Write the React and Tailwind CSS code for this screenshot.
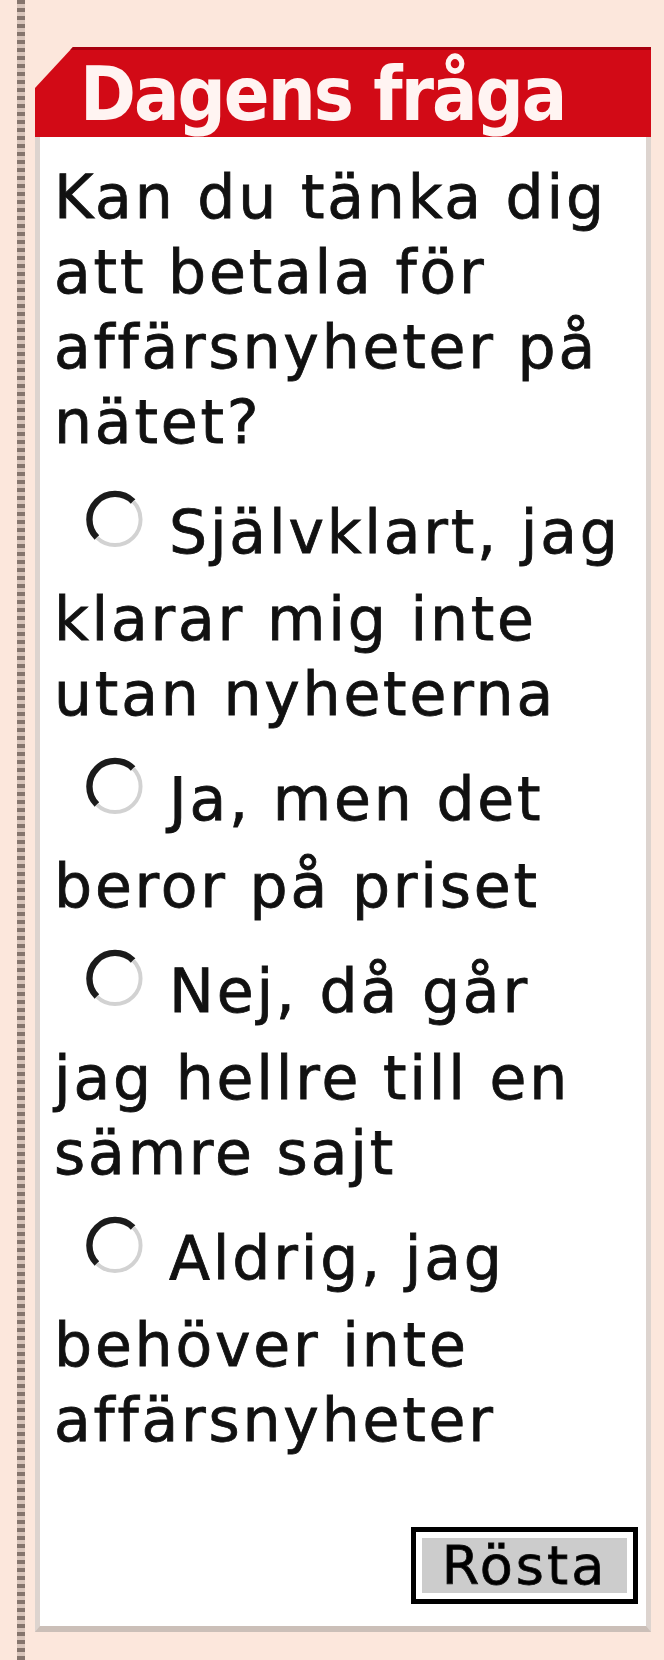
const options = [
  ["Självklart, jag", "klarar mig inte", "utan nyheterna"],
  ["Ja, men det", "beror på priset"],
  ["Nej, då går", "jag hellre till en", "sämre sajt"],
  ["Aldrig, jag", "behöver inte", "affärsnyheter"],
];

// old-style sunken radio: dark upper-left arc, pale lower-right arc
const Radio = () => (
  <svg
    viewBox="0 0 60 60"
    className="inline-block w-[60px] h-[59px] ml-[31px] mr-[24px] mt-[25px] mb-[33px] align-[-29px]"
  >
    <circle cx="30" cy="30" r="26" fill="#ffffff" />
    <path d="M48.4 11.6 A26 26 0 0 0 11.6 48.4" stroke="#1b1b1b" strokeWidth="6.5" fill="none" />
    <path d="M11.6 48.4 A26 26 0 0 0 48.4 11.6" stroke="#d2d2d2" strokeWidth="4" fill="none" />
  </svg>
);

export default function App() {
  return (
    <div className="flex w-[664px] h-[1660px] bg-[#fce7dc] font-['DejaVu_Sans',sans-serif]">
      {/* dotted rule down the left edge */}
      <div className="w-[35px] shrink-0">
        <div className="ml-[17px] w-[8px] h-full bg-[repeating-linear-gradient(to_bottom,#85756d_0px,#85756d_4px,#d8c5bb_4px,#d8c5bb_8px)]" />
      </div>

      <div className="w-[616px] mt-[47px] flex flex-col">
        {/* red title bar with the clipped corner */}
        <div className="h-[90px] bg-[#d20a16] border-t-[3px] border-[#a8000e] pl-[45px] pt-[1px] [clip-path:polygon(38px_0,100%_0,100%_100%,0_100%,0_41px)]">
          <h2 className="text-[75px] leading-[86px] font-bold tracking-[-2px] text-[#fff4f2] font-['DejaVu_Sans_Condensed','DejaVu_Sans',sans-serif] font-stretch-condensed whitespace-nowrap">
            Dagens fråga
          </h2>
        </div>

        <div className="bg-white border-x-[5px] border-b-[6px] border-x-[#ddd4cf] border-b-[#cbbfb8] pl-[14px] pt-[23px] pr-[8px] pb-[22px] text-[60px] leading-[75px] tracking-[2.8px] text-[#111111] [-webkit-text-stroke:0.8px_#111111] whitespace-nowrap">
          <p className="mb-[5px]">
            Kan du tänka dig
            <br />
            att betala för
            <br />
            affärsnyheter på
            <br />
            nätet?
          </p>

          {options.map((lines, i) => (
            <label key={i} className="block">
              <Radio />
              {lines.map((line, j) => (
                <span key={j}>
                  {j > 0 && <br />}
                  {line}
                </span>
              ))}
            </label>
          ))}

          <div className="flex justify-end mt-[69px]">
            <button className="border-[5px] border-black bg-white p-[6px]">
              <span className="flex items-center justify-center w-[205px] h-[55px] bg-[#cccccc] text-[54px] leading-[55px] tracking-[3px] text-black">
                Rösta
              </span>
            </button>
          </div>
        </div>
      </div>
    </div>
  );
}
